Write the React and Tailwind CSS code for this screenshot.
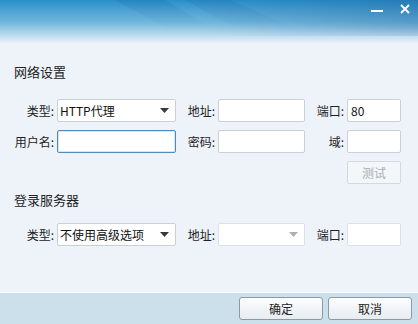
import React from 'react';

const font = { fontFamily: '"Noto Sans CJK SC", "Microsoft YaHei", sans-serif' };

function Caret({ muted }) {
  return (
    <svg width="9" height="5" viewBox="0 0 9 5" className="shrink-0">
      <path d="M0 0h9L4.5 5z" fill={muted ? '#a9b0b8' : '#3a3a3a'} />
    </svg>
  );
}

function Label({ children }) {
  return <div className="flex items-center justify-end pr-[3px] text-[12px] text-[#222]">{children}</div>;
}

function Box({ children, className = '' }) {
  return (
    <div className={`h-[23px] flex items-center rounded-[2px] border bg-white px-[4px] text-[12px] text-[#111] ${className}`}>
      {children}
    </div>
  );
}

export default function App() {
  return (
    <div className="w-[418px] h-[324px] flex flex-col bg-[#eef3fa] overflow-hidden" style={font}>
      <div className="relative h-[44px] shrink-0 bg-gradient-to-b from-[#2690c9] via-[#6fb6dc] to-[#eef3fa]">
        <svg className="absolute inset-0" width="418" height="44" viewBox="0 0 418 44">
          <defs>
            <linearGradient id="fade" x1="0" y1="0" x2="0" y2="1">
              <stop offset="0" stopColor="#1b5f9a" stopOpacity="0.18" />
              <stop offset="1" stopColor="#1b5f9a" stopOpacity="0" />
            </linearGradient>
            <linearGradient id="side" x1="0" y1="0" x2="1" y2="0">
              <stop offset="0" stopColor="#1d5d99" stopOpacity="0" />
              <stop offset="1" stopColor="#1d5d99" stopOpacity="0.4" />
            </linearGradient>
            <linearGradient id="sideFade" x1="0" y1="0" x2="0" y2="1">
              <stop offset="0" stopColor="#fff" stopOpacity="1" />
              <stop offset="0.6" stopColor="#fff" stopOpacity="0.7" />
              <stop offset="1" stopColor="#fff" stopOpacity="0" />
            </linearGradient>
            <mask id="m">
              <rect x="0" y="0" width="418" height="44" fill="url(#sideFade)" />
            </mask>
          </defs>
          <g mask="url(#m)">
            <polygon points="115,0 165,0 215,30 170,30" fill="url(#fade)" />
            <polygon points="185,0 235,28 300,30 230,0" fill="url(#fade)" />
            <rect x="200" y="0" width="218" height="36" fill="url(#side)" />
          </g>
        </svg>
        <div className="absolute right-[35px] top-[10px] w-[12px] h-[2px] bg-white" />
        <svg className="absolute right-[8px] top-[4px]" width="10" height="10" viewBox="0 0 10 10">
          <path d="M1 1l8 8M9 1l-8 8" stroke="#fff" strokeWidth="1.8" />
        </svg>
      </div>

      <div className="flex-1 flex flex-col px-[14px]">
        <div className="mt-[20px] text-[13px] leading-[16px] text-[#222]">网络设置</div>

        <div className="mt-[19px] grid grid-cols-[43px_119px_42px_87px_42px_54px] grid-rows-[23px_23px_23px] gap-y-[8px]">
          <Label>类型:</Label>
          <Box className="border-[#c9d0d8] justify-between pl-[2px] pr-[6px]">
            <span>HTTP代理</span>
            <Caret />
          </Box>
          <Label>地址:</Label>
          <Box className="border-[#c9d0d8]" />
          <Label>端口:</Label>
          <Box className="border-[#c9d0d8] pl-[3px]">80</Box>

          <Label>用户名:</Label>
          <Box className="border-[#4d8bbd] shadow-[inset_0_0_0_1px_#d6e6f3]" />
          <Label>密码:</Label>
          <Box className="border-[#c9d0d8]" />
          <Label>域:</Label>
          <Box className="border-[#c9d0d8]" />

          <div className="col-start-6 h-[23px] flex items-center justify-center rounded-[2px] border border-[#d3d9df] bg-[#f4f7fa] text-[12px] text-[#a8adb2]">
            测试
          </div>
        </div>

        <div className="mt-[8px] text-[13px] leading-[16px] text-[#222]">登录服务器</div>

        <div className="mt-[15px] grid grid-cols-[43px_119px_42px_87px_42px_54px] grid-rows-[23px]">
          <Label>类型:</Label>
          <Box className="border-[#c9d0d8] justify-between pl-[2px] pr-[6px]">
            <span>不使用高级选项</span>
            <Caret />
          </Box>
          <Label>地址:</Label>
          <Box className="border-[#dbe1e7] bg-[#f6f9fc] justify-end pr-[6px]">
            <Caret muted />
          </Box>
          <Label>端口:</Label>
          <Box className="border-[#dbe1e7] bg-[#f6f9fc]" />
        </div>
      </div>

      <div className="h-[32px] shrink-0 flex items-center justify-end gap-[5px] pr-[6px] bg-[#cce0ec] border-t border-[#f8fbfd]">
        <button className="w-[84px] h-[23px] rounded-[3px] border border-[#8d9aa6] bg-gradient-to-b from-[#fdfdfe] to-[#e6ecf1] text-[12px] text-[#222]">
          确定
        </button>
        <button className="w-[84px] h-[23px] rounded-[3px] border border-[#8d9aa6] bg-gradient-to-b from-[#fdfdfe] to-[#e6ecf1] text-[12px] text-[#222]">
          取消
        </button>
      </div>
    </div>
  );
}
